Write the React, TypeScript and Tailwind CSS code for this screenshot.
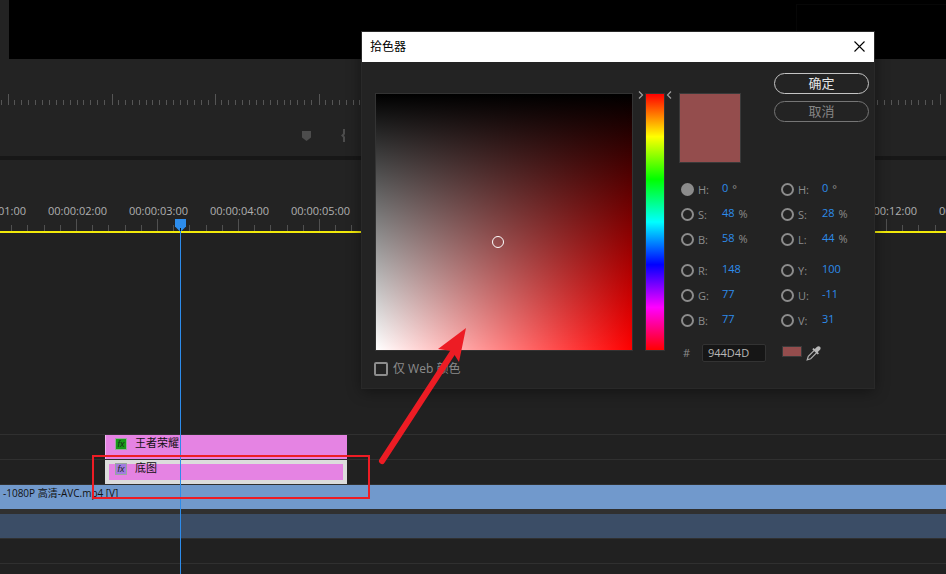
import { useState } from "react";

const SANS = "font-['Open_Sans','Noto_Sans_CJK_SC',sans-serif]";

type Channel = { id: string; label: string; value: string; unit?: string };

const LEFT_CHANNELS: Channel[][] = [
  [
    { id: "hsb-h", label: "H:", value: "0", unit: "°" },
    { id: "hsb-s", label: "S:", value: "48", unit: "%" },
    { id: "hsb-b", label: "B:", value: "58", unit: "%" },
  ],
  [
    { id: "rgb-r", label: "R:", value: "148" },
    { id: "rgb-g", label: "G:", value: "77" },
    { id: "rgb-b", label: "B:", value: "77" },
  ],
];

const RIGHT_CHANNELS: Channel[][] = [
  [
    { id: "hsl-h", label: "H:", value: "0", unit: "°" },
    { id: "hsl-s", label: "S:", value: "28", unit: "%" },
    { id: "hsl-l", label: "L:", value: "44", unit: "%" },
  ],
  [
    { id: "yuv-y", label: "Y:", value: "100" },
    { id: "yuv-u", label: "U:", value: "-11" },
    { id: "yuv-v", label: "V:", value: "31" },
  ],
];

const TIMECODES = Array.from({ length: 32 }, (_, i) => `00:00:${String(i + 1).padStart(2, "0")}:00`);
const MONITOR_TICKS = Array.from({ length: 420 }, (_, i) => i - 1);

function MonitorPanel() {
  return (
    <section className="bg-[#232323]">
      <div className="ml-[9px] flex h-[59px] justify-end bg-black">
        <div className="mt-1 w-[150px] border-t border-l border-[#070707]" />
      </div>
      <svg className="mt-[35px] block h-[11px] w-full" fill="#555555" shapeRendering="crispEdges">
        {MONITOR_TICKS.map((i) => {
          const major = i % 15 === 0;
          const x = major ? Math.round(8 + i * 6.9) : Math.floor(8 + i * 6.9);
          return <rect key={i} x={x} y={major ? 0 : 6} width="1" height={major ? 11 : 5} />;
        })}
      </svg>
      <div className="flex h-[51px] items-start gap-[30px] pt-6 pl-[302px]">
        <button aria-label="添加标记" className="pt-0.5">
          <svg width="9" height="10" fill="#4c4c4c">
            <path d="M0 0h9v6.5L4.500 10 0 6.500z" />
          </svg>
        </button>
        <button aria-label="标记入点">
          <svg width="5" height="13" fill="#4c4c4c">
            <path d="M2 0h2v5L3 6.500 4 8v5H2V8.500L0 6.500l2-2z" />
          </svg>
        </button>
      </div>
      <div className="h-1 bg-[#171717]" />
    </section>
  );
}

function TimeRuler() {
  return (
    <div className="overflow-hidden border-b-2 border-[#f2ea0a] bg-[#232323] pt-[43px]">
      <div className="-ml-[45px] flex">
        {TIMECODES.map((tc) => (
          <div key={tc} className="w-[81px] shrink-0">
            <div className="h-4 pl-0.5 text-center text-[11px] leading-4 text-[#b0b0b0]">{tc}</div>
            <svg className="block" width="81" height="12" fill="#505050" shapeRendering="crispEdges">
              <rect x="8" y="6" width="1" height="6" />
              <rect x="24" y="6" width="1" height="6" />
              <rect x="40" y="0" width="1" height="12" />
              <rect x="56" y="6" width="1" height="6" />
              <rect x="72" y="6" width="1" height="6" />
            </svg>
          </div>
        ))}
      </div>
    </div>
  );
}

function FxBadge({ className }: { className: string }) {
  return (
    <span
      className={`flex size-[12px] items-center justify-center border border-[#9aa89e] font-['Liberation_Sans',sans-serif] text-[9px] leading-none text-[#1c2b1c] italic ${className}`}
    >
      fx
    </span>
  );
}

function Tracks() {
  return (
    <div className="flex-1 bg-[#212121]">
      <div className="h-[202px] border-b border-[#303030]" />
      <div className="h-[25px] border-b border-[#303030] pl-[105px]">
        <div className="flex h-6 w-[242px] items-start gap-2 border-l border-[#f0b4ef] bg-[#e583e3] pl-[9px]">
          <FxBadge className="mt-[3px] bg-[#189a18]" />
          <span className="text-[11px] leading-4 text-[#111111]">王者荣耀</span>
        </div>
      </div>
      <div className="h-[25px] border-b border-[#303030] pl-[105px]">
        <div className="flex h-6 w-[242px] items-start gap-2 border-4 border-[#dcdcdc] bg-[#e583e3] pl-[6px]">
          <FxBadge className="-mt-px bg-[#a27be0]" />
          <span className="-mt-1 text-[11px] leading-4 text-[#111111]">底图</span>
        </div>
      </div>
      <div className="h-[29px] border-b-5 border-[#303030] bg-[#7199cc] pl-[3px] text-[10px] leading-4 text-[#111111]">
        -1080P 高清-AVC.mp4 [V]
      </div>
      <div className="h-[25px] border-b border-[#303030] bg-[#3b4d66]" />
      <div className="h-[25px] border-b border-[#303030]" />
      <div className="h-[10px]" />
    </div>
  );
}

function ChannelColumn({
  groups,
  active,
  onSelect,
}: {
  groups: Channel[][];
  active: string;
  onSelect: (id: string) => void;
}) {
  return (
    <div className="flex flex-col gap-[6px]">
      {groups.map((group, i) => (
        <div key={i}>
          {group.map((ch) => (
            <div key={ch.id} className="flex h-[25px] items-center text-[11px] leading-4">
              <input
                id={ch.id}
                type="radio"
                name="channel"
                checked={active === ch.id}
                onChange={() => onSelect(ch.id)}
                className="size-[13px] appearance-none rounded-full border-2 border-[#8c8c8c] checked:bg-[#8c8c8c]"
              />
              <label htmlFor={ch.id} className="w-7 pl-1 text-[#8c8c8c]">
                {ch.label}
              </label>
              <button className="pb-1 text-[#2d8ceb]">{ch.value}</button>
              {ch.unit && <span className="pb-0.5 pl-1 text-[#8c8c8c]">{ch.unit}</span>}
            </div>
          ))}
        </div>
      ))}
    </div>
  );
}

function ColorPicker() {
  const [active, setActive] = useState("hsb-h");
  const [hex, setHex] = useState("944D4D");
  const [webOnly, setWebOnly] = useState(false);

  return (
    <div
      role="dialog"
      aria-label="拾色器"
      className="absolute top-8 left-[362px] w-[512px] bg-[#232323] shadow-[0_3px_14px_rgba(0,0,0,0.45)] outline outline-[#292929]"
    >
      <div className="flex h-[30px] items-center justify-between bg-white pr-[9px] pl-2">
        <h1 className="text-[12px] leading-4 text-black">拾色器</h1>
        <button aria-label="关闭" className="pb-0.5">
          <svg width="11" height="11" fill="none" stroke="#000000" strokeWidth="1.1">
            <path d="M.5.5l10 10M10.500.5l-10 10" />
          </svg>
        </button>
      </div>

      <div className="flex pt-[11px] pr-[5px] pb-[11px] pl-[12px]">
        <div className="pt-5">
          <div className="ml-px size-[258px] border border-[#333333] bg-[linear-gradient(to_bottom,#000,transparent),linear-gradient(to_right,#fff,#f00)]">
            <div className="relative top-[142px] left-[116px] size-3 rounded-full border border-white" />
          </div>
          <div className="mt-[10px] flex items-center gap-[5px]">
            <input
              id="web-only"
              type="checkbox"
              checked={webOnly}
              onChange={(e) => setWebOnly(e.target.checked)}
              className="size-[14px] appearance-none rounded-xs border-2 border-[#8c8c8c] checked:bg-[#8c8c8c]"
            />
            <label htmlFor="web-only" className="text-[12px] leading-4 text-[#8c8c8c]">
              仅 Web 颜色
            </label>
          </div>
        </div>

        <div className="ml-[5px] flex items-start gap-px pt-[18px]">
          <svg width="6" height="8" fill="none" stroke="#a0a0a0" strokeWidth="1.2">
            <path d="M1 .5l3.500 3.500L1 7.500" />
          </svg>
          <div className="mt-0.5 h-[258px] w-[20px] border border-[#333333] bg-[linear-gradient(to_bottom,#f00,#ff0,#0f0,#0ff,#00f,#f0f,#f00)]" />
          <svg width="6" height="8" fill="none" stroke="#a0a0a0" strokeWidth="1.2">
            <path d="M5 .5L1.500 4 5 7.500" />
          </svg>
        </div>

        <div className="ml-[7px] flex-1">
          <div className="flex items-start justify-between">
            <div className="mt-5 h-[70px] w-[62px] border border-[#3a3a3a] bg-[#944d4d]" />
            <div className="flex w-[95px] flex-col gap-[7px] text-[13px] leading-none">
              <button className="h-[21px] rounded-full border border-[#c4c4c4] text-[#e6e6e6]">确定</button>
              <button className="h-[21px] rounded-full border border-[#757575] text-[#858585]">取消</button>
            </div>
          </div>

          <div className="mt-[14px] grid grid-cols-[100px_1fr] pl-0.5">
            <ChannelColumn groups={LEFT_CHANNELS} active={active} onSelect={setActive} />
            <ChannelColumn groups={RIGHT_CHANNELS} active={active} onSelect={setActive} />
          </div>

          <div className="mt-[11px] flex items-center pl-1">
            <label htmlFor="hex" className="w-[19px] text-[11px] leading-4 text-[#8c8c8c]">
              #
            </label>
            <input
              id="hex"
              value={hex}
              onChange={(e) => setHex(e.target.value)}
              className="h-[18px] w-[64px] rounded-xs border border-[#333333] bg-[#161616] pb-0.5 pl-[5px] text-[11px] text-[#b8b8b8]"
            />
            <div className="mb-1 ml-4 h-[11px] w-[20px] border border-[#3a3a3a] bg-[#944d4d]" />
            <button aria-label="吸管" className="ml-1">
              <svg width="15" height="15" viewBox="0 0 15 15">
                <path d="M8.300 4.300L2.300 10.300 1.200 13.800 4.700 12.700 10.700 6.700" fill="none" stroke="#b0b0b0" strokeWidth="1.200" />
                <path
                  d="M6.300 3.300l1.200-1.200 1.300 1 2-2.100c1-1 2.300-1.100 3.200-.2s.8 2.200-.2 3.200l-2 2 1.100 1.400-1.200 1.200z"
                  fill="#b8b8b8"
                />
              </svg>
            </button>
          </div>
        </div>
      </div>
    </div>
  );
}

function Playhead() {
  return (
    <div className="pointer-events-none absolute top-[219px] bottom-0 left-[175px] flex w-[11px] flex-col items-center">
      <svg className="shrink-0" width="11" height="12" fill="#2d8ceb">
        <path d="M0 0h11v7.500L6.500 12h-2L0 7.500z" />
        <rect x="5" y="9" width="1" height="3" fill="#111111" />
      </svg>
      <div className="w-px flex-1 bg-[#2d8ceb]" />
    </div>
  );
}

export default function App() {
  return (
    <main className={`relative flex min-h-screen flex-col overflow-hidden bg-[#212121] ${SANS}`}>
      <MonitorPanel />
      <TimeRuler />
      <Tracks />
      <Playhead />
      <ColorPicker />

      {/* Callout from the selected clip to the picker */}
      <div className="pointer-events-none absolute top-[455px] left-[92px] h-[44px] w-[278px] border-2 border-[#ed1c24]" />
      <svg className="pointer-events-none absolute top-[325px] left-[375px]" width="96" height="142">
        <path d="M7 136L78 27" stroke="#ed1c24" strokeWidth="6" strokeLinecap="round" />
        <path d="M91 3L63 24l14 2 7 11z" fill="#ed1c24" />
      </svg>
    </main>
  );
}
